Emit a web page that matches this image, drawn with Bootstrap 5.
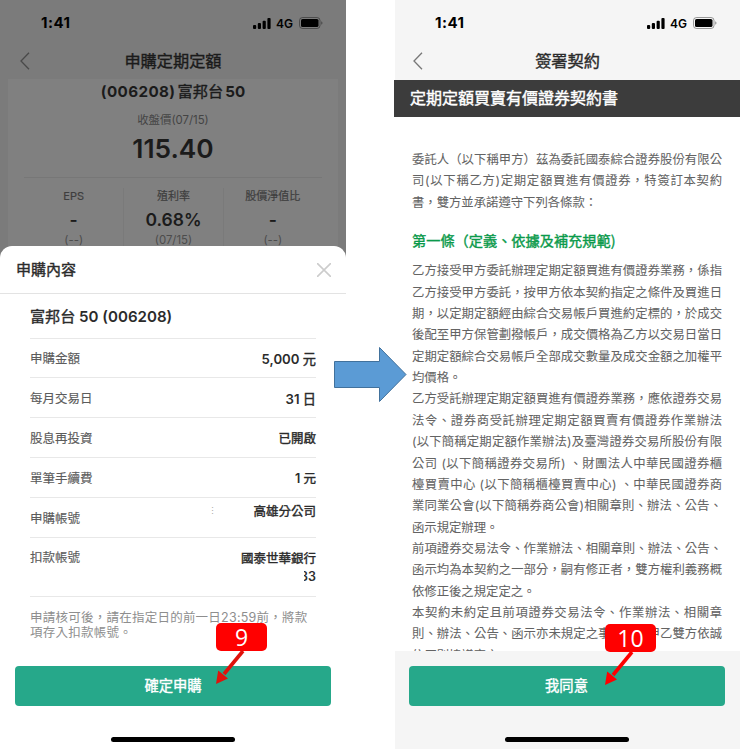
<!DOCTYPE html>
<html lang="zh-Hant-TW">
<head>
<meta charset="utf-8">
<meta name="viewport" content="width=device-width, initial-scale=1">
<title>定期定額申購</title>
<link href="https://cdn.jsdelivr.net/npm/bootstrap@5.3.0/dist/css/bootstrap.min.css" rel="stylesheet">
<style>
body{font-family:Inter,"Noto Sans CJK TC",sans-serif;width:740px;height:749px;font-size:12.5px;line-height:18px;color:#2b2b2b;overflow:hidden;background:#fff}
.board{width:740px;height:749px}
.phone{height:749px;overflow:hidden}
.phone-a{width:346px;background:#7b7b7b;color:#1b1b1b}
.phone-b{width:345px;background:#f5f5f5}
.med{font-weight:400!important;-webkit-text-stroke:.4px currentColor}
.status{height:42px;padding:4px 23px 0 41px;color:#000}
.phone-b .status{padding-left:40px}
.clock{font-size:15px;font-weight:700;letter-spacing:.5px}
.net{font-size:12px;font-weight:600;margin:1px 6px 0 5px}
.topnav{height:37px;padding:0 22px 0 20px}
.phone-b .topnav{padding:0 20px 0 18px}
.topnav h1{font-size:16.2px;margin:0;line-height:20px}
.topnav svg{width:10px}
.quote{height:175px;background:#808080;margin:0 8px;text-align:center}
.q-name{font-size:15.2px;font-weight:700;height:25px;line-height:25px;word-spacing:-1.5px}
.q-name i{font-style:normal;letter-spacing:.4px}
.q-sub{font-size:11.4px;line-height:18px;height:30px;padding-top:7px;color:#444}
.q-price{font-size:26.3px;font-weight:600;line-height:30px;height:43px}
.q-grid{margin:0 16px;border-top:1px solid #777;padding-top:10px}
.q-grid>div{height:70px;width:100px;color:#3e3e3e}
.q-grid>div+div{border-left:1px solid #7a7a7a}
.q-label{font-size:11px;line-height:16px;-webkit-text-stroke:.2px currentColor}
.q-val{font-size:17.5px;font-weight:600;line-height:24px;color:#1b1b1b;margin-top:4px}
.q-date{font-size:11.4px;line-height:17px;color:#4c4c4c}
.sheet{height:503px;margin-top:-8px;background:#fff;border-radius:12px 12px 0 0;color:#2b2b2b;position:relative}
.sheet-head{height:48px;padding:0 15px 0 16px;border-bottom:1px solid #e3e3e3;font-size:15px}
.rows{margin:0 30px}
.line-row{height:40px;border-bottom:1px solid #e8e8e8;color:#5c5c5c}
.line-row>span:first-child{padding-top:2px;-webkit-text-stroke:.15px currentColor}
.line-row b{font-weight:600;color:#2b2b2b;padding-top:2px}
.num{font-size:13.2px}
.line-row.r-name{height:45px;font-size:15.1px;font-weight:600;color:#2b2b2b;padding-top:2px}
.line-row.r-amt{height:39px}
.line-row.r-bank{height:59px;padding-top:9px}
.line-row.r-bank b{padding-top:3px}
.half{display:inline-block;width:12px;overflow:hidden;direction:rtl;vertical-align:top}
.dots{color:#aaa;font-size:9px;margin-left:auto;margin-right:36px}
.up{position:relative;top:-7px}
.note{margin:13px 0 0;color:#8e8e8e;line-height:15px;height:56px;white-space:nowrap;letter-spacing:.24px}
.go{height:40px;border-radius:4px;background:#26a88a;color:#fff;font-size:14.3px;border:0;padding:0;width:316px;display:block}
.go:hover{background:#26a88a;color:#fff}
.homebar{width:124px;height:5px;border-radius:3px;background:#000;margin:31px auto 0}
.footer-bar{padding:15px 2px 0 0}
.doc-title{height:37px;line-height:36px;background:#3c3c3c;color:#fff;font-size:16px;padding-left:16px;width:346px;margin:1px 0 0 -1px}
.paper{height:534px;background:#fff;overflow:hidden;padding:32px 0 0 17px;color:#636363}
.paper p{margin:0;width:310px;font-size:12.35px;line-height:21.35px;-webkit-text-stroke:.05px currentColor}
.paper span{display:block;white-space:nowrap;text-align:justify;text-align-last:justify;text-justify:inter-character}
.paper .tail{text-align-last:left}
.paper h2{font-size:14.2px;color:#0b9a4b;line-height:20px;margin:17px 0 10.4px;white-space:nowrap;font-family:"Noto Sans CJK TC",sans-serif}
.step{position:absolute;width:51px;height:28px;border-radius:5px;background:#f00;color:#fff;font:23px/28px "Open Sans",sans-serif;text-align:center}
.over{position:absolute;overflow:visible}
</style>
</head>
<body>
<svg class="d-none">
  <symbol id="sig" viewBox="0 0 18 11"><rect x="0" y="7" width="3.2" height="4" rx="1"/><rect x="4.8" y="5" width="3.2" height="6" rx="1"/><rect x="9.6" y="2.7" width="3.2" height="8.3" rx="1"/><rect x="14.4" y="0" width="3.2" height="11" rx="1"/></symbol>
  <symbol id="bat" viewBox="0 0 24 12"><rect x=".5" y=".5" width="20.5" height="11" rx="3" fill="none" stroke="#000" stroke-opacity=".38"/><rect x="2" y="2" width="17.5" height="8" rx="1.6"/><path d="M22.2 4.2v3.6q1.3-.5 1.3-1.8t-1.3-1.8" fill-opacity=".4"/></symbol>
  <symbol id="back" viewBox="0 0 10 18"><path d="M9 .8 1 9l8 8.2" fill="none" stroke="currentColor" stroke-width="1.3"/></symbol>
</svg>
<main class="board position-relative d-flex justify-content-between">
  <section class="phone phone-a">
    <div class="status d-flex align-items-center"><span class="clock me-auto">1:41</span><svg width="18" height="11"><use href="#sig"/></svg><span class="net">4G</span><svg width="24" height="12"><use href="#bat"/></svg></div>
    <header class="topnav d-flex align-items-center justify-content-between"><svg height="18" color="#4a4a4a"><use href="#back"/></svg><h1 class="med">申購定期定額</h1><i class="px-1"></i></header>
    <div class="quote">
      <div class="q-name"><i>(006208)</i> <span class="med">富邦台</span> 50</div>
      <div class="q-sub">收盤價(07/15)</div>
      <div class="q-price">115.40</div>
      <div class="q-grid d-flex">
        <div><div class="q-label">EPS</div><div class="q-val">-</div><div class="q-date">(--)</div></div>
        <div><div class="q-label">殖利率</div><div class="q-val">0.68%</div><div class="q-date">(07/15)</div></div>
        <div><div class="q-label">股價淨值比</div><div class="q-val">-</div><div class="q-date">(--)</div></div>
      </div>
    </div>
    <div class="sheet">
      <div class="sheet-head d-flex align-items-center justify-content-between"><span class="med">申購內容</span><svg width="14" height="14"><path d="M0 0 14 14M14 0 0 14" stroke="#ccc" stroke-width="1.6"/></svg></div>
      <div class="rows">
        <div class="line-row r-name d-flex align-items-center"><div><span class="med">富邦台</span> 50 (006208)</div></div>
        <div class="line-row r-amt d-flex align-items-center justify-content-between"><span>申購金額</span><b class="num">5,000 <span class="med">元</span></b></div>
        <div class="line-row d-flex align-items-center justify-content-between"><span>每月交易日</span><b class="num">31 <span class="med">日</span></b></div>
        <div class="line-row d-flex align-items-center justify-content-between"><span>股息再投資</span><b class="med">已開啟</b></div>
        <div class="line-row d-flex align-items-center justify-content-between"><span>單筆手續費</span><b>1 <span class="med">元</span></b></div>
        <div class="line-row d-flex align-items-center"><span>申購帳號</span><span class="dots up">⋮</span><b class="med up">高雄分公司</b></div>
        <div class="line-row r-bank d-flex justify-content-between"><span>扣款帳號</span><b class="text-end"><span class="med">國泰世華銀行</span><br><span class="half">33</span></b></div>
        <p class="note">申請核可後，請在指定日的前一日23:59前，將款<br>項存入扣款帳號。</p>
      </div>
      <button class="go btn mx-auto med">確定申購</button>
      <div class="homebar"></div>
    </div>
  </section>
  <section class="phone phone-b overflow-visible">
    <div class="status d-flex align-items-center"><span class="clock me-auto">1:41</span><svg width="18" height="11"><use href="#sig"/></svg><span class="net">4G</span><svg width="24" height="12"><use href="#bat"/></svg></div>
    <header class="topnav d-flex align-items-center justify-content-between"><svg height="18" color="#777"><use href="#back"/></svg><h1 class="med">簽署契約</h1><i class="px-1"></i></header>
    <div class="doc-title med">定期定額買賣有價證券契約書</div>
    <article class="paper">
      <p><span>委託人（以下稱甲方）茲為委託國泰綜合證券股份有限公</span><span>司(以下稱乙方)定期定額買進有價證券，特簽訂本契約</span><span class="tail">書，雙方並承諾遵守下列各條款：</span></p>
      <h2 class="med">第一條（定義、依據及補充規範)</h2>
      <p><span>乙方接受甲方委託辦理定期定額買進有價證券業務，係指</span><span>乙方接受甲方委託，按甲方依本契約指定之條件及買進日</span><span>期，以定期定額經由綜合交易帳戶買進約定標的，於成交</span><span>後配至甲方保管劃撥帳戶，成交價格為乙方以交易日當日</span><span>定期定額綜合交易帳戶全部成交數量及成交金額之加權平</span><span class="tail">均價格。</span></p>
      <p><span>乙方受託辦理定期定額買進有價證券業務，應依證券交易</span><span>法令、證券商受託辦理定期定額買賣有價證券作業辦法</span><span>(以下簡稱定期定額作業辦法)及臺灣證券交易所股份有限</span><span>公司 (以下簡稱證券交易所) 、財團法人中華民國證券櫃</span><span>檯買賣中心 (以下簡稱櫃檯買賣中心) 、中華民國證券商</span><span>業同業公會(以下簡稱券商公會)相關章則、辦法、公告、</span><span class="tail">函示規定辦理。</span></p>
      <p><span>前項證券交易法令、作業辦法、相關章則、辦法、公告、</span><span>函示均為本契約之一部分，嗣有修正者，雙方權利義務概</span><span class="tail">依修正後之規定定之。</span></p>
      <p><span>本契約未約定且前項證券交易法令、作業辦法、相關章</span><span>則、辦法、公告、函示亦未規定之事項，由甲乙雙方依誠</span><span class="tail">信原則協議定之。</span></p>
    </article>
    <div class="footer-bar"><button class="go btn mx-auto med">我同意</button><div class="homebar"></div></div>
  </section>

  <svg class="over" style="left:334px;top:346px" width="74" height="57"><path d="M.5 15.5h45V1.5L72 28.5 45.500 55.500v-14H.5z" fill="#5b9bd5" stroke="#41719c"/></svg>
  <div class="step" style="left:216px;top:623px">9</div>
  <svg class="over" style="left:216px;top:650px" width="30" height="36"><path d="M27 1 8 24" stroke="#e0120c" stroke-width="3.6"/><path d="M0 34 2.200 20.500 12 28.500z" fill="#e0120c"/></svg>
  <div class="step" style="left:605px;top:624px">10</div>
  <svg class="over" style="left:605px;top:652px" width="30" height="36"><path d="M27 0 8 23" stroke="#f00" stroke-width="3.600"/><path d="M0 33 2.200 19.500 12 27.500z" fill="#f00"/></svg>
</main>
<script src="https://cdn.jsdelivr.net/npm/bootstrap@5.3.0/dist/js/bootstrap.bundle.min.js"></script>
</body>
</html>
